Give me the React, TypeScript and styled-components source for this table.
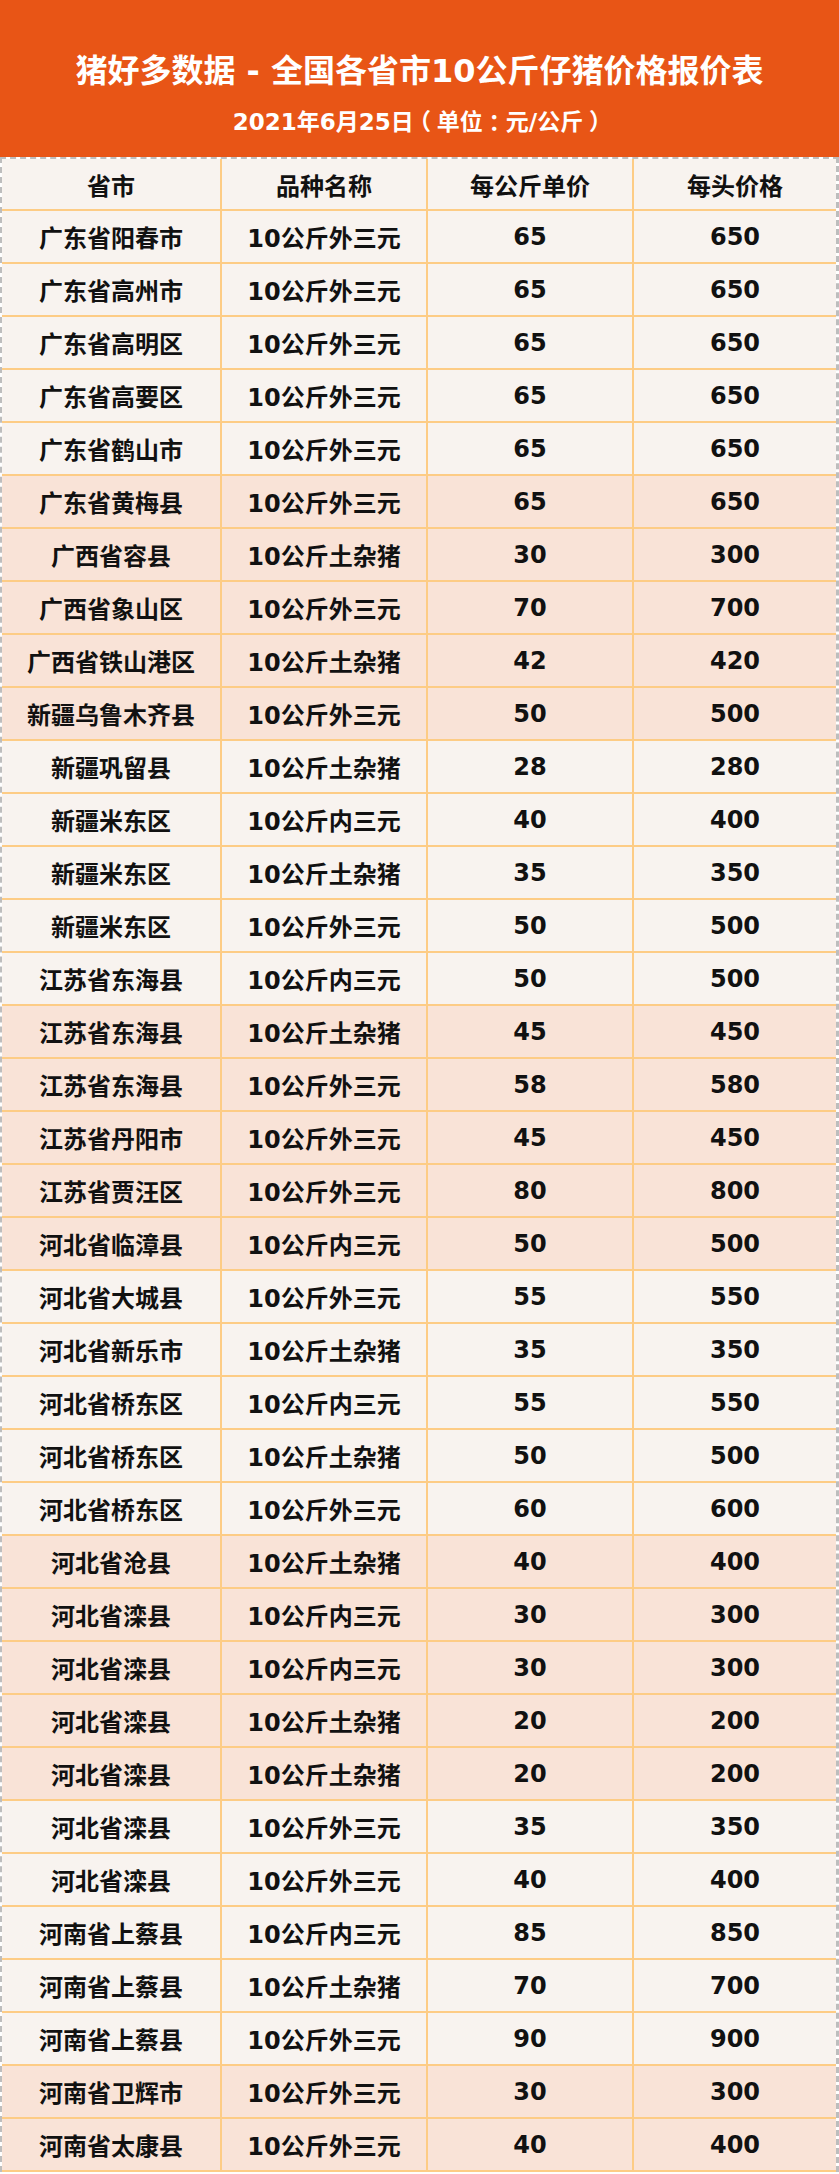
import styled, { createGlobalStyle } from "styled-components";

const GlobalStyle = createGlobalStyle`
  html, body {
    margin: 0;
    padding: 0;
    background: #ffffff;
  }
  body {
    font-family: "DejaVu Sans", "Noto Sans CJK SC", sans-serif;
  }
`;

type Row = [string, string, number, number];

const rows: Row[] = [
  ["广东省阳春市", "10公斤外三元", 65, 650],
  ["广东省高州市", "10公斤外三元", 65, 650],
  ["广东省高明区", "10公斤外三元", 65, 650],
  ["广东省高要区", "10公斤外三元", 65, 650],
  ["广东省鹤山市", "10公斤外三元", 65, 650],
  ["广东省黄梅县", "10公斤外三元", 65, 650],
  ["广西省容县", "10公斤土杂猪", 30, 300],
  ["广西省象山区", "10公斤外三元", 70, 700],
  ["广西省铁山港区", "10公斤土杂猪", 42, 420],
  ["新疆乌鲁木齐县", "10公斤外三元", 50, 500],
  ["新疆巩留县", "10公斤土杂猪", 28, 280],
  ["新疆米东区", "10公斤内三元", 40, 400],
  ["新疆米东区", "10公斤土杂猪", 35, 350],
  ["新疆米东区", "10公斤外三元", 50, 500],
  ["江苏省东海县", "10公斤内三元", 50, 500],
  ["江苏省东海县", "10公斤土杂猪", 45, 450],
  ["江苏省东海县", "10公斤外三元", 58, 580],
  ["江苏省丹阳市", "10公斤外三元", 45, 450],
  ["江苏省贾汪区", "10公斤外三元", 80, 800],
  ["河北省临漳县", "10公斤内三元", 50, 500],
  ["河北省大城县", "10公斤外三元", 55, 550],
  ["河北省新乐市", "10公斤土杂猪", 35, 350],
  ["河北省桥东区", "10公斤内三元", 55, 550],
  ["河北省桥东区", "10公斤土杂猪", 50, 500],
  ["河北省桥东区", "10公斤外三元", 60, 600],
  ["河北省沧县", "10公斤土杂猪", 40, 400],
  ["河北省滦县", "10公斤内三元", 30, 300],
  ["河北省滦县", "10公斤内三元", 30, 300],
  ["河北省滦县", "10公斤土杂猪", 20, 200],
  ["河北省滦县", "10公斤土杂猪", 20, 200],
  ["河北省滦县", "10公斤外三元", 35, 350],
  ["河北省滦县", "10公斤外三元", 40, 400],
  ["河南省上蔡县", "10公斤内三元", 85, 850],
  ["河南省上蔡县", "10公斤土杂猪", 70, 700],
  ["河南省上蔡县", "10公斤外三元", 90, 900],
  ["河南省卫辉市", "10公斤外三元", 30, 300],
  ["河南省太康县", "10公斤外三元", 40, 400],
];

function App() {
  return (
    <Page>
      <GlobalStyle />
      <Banner>
        <Title>猪好多数据 - 全国各省市10公斤仔猪价格报价表</Title>
        <SubTitle>
          2021年6月25日<Mark>（</Mark>单位<Mark>：</Mark>元/公斤<Mark>）</Mark>
        </SubTitle>
      </Banner>
      <Table>
        <TableRow $tone="cream" $head>
          <Cell>省市</Cell>
          <Cell>品种名称</Cell>
          <Cell>每公斤单价</Cell>
          <Cell>每头价格</Cell>
        </TableRow>
        {rows.map((r, i) => (
          <TableRow key={i} $tone={Math.floor(i / 5) % 2 ? "pink" : "cream"}>
            <Cell>{r[0]}</Cell>
            <Cell>{r[1]}</Cell>
            <Cell>{r[2]}</Cell>
            <Cell>{r[3]}</Cell>
          </TableRow>
        ))}
      </Table>
    </Page>
  );
}
export default App;

const Page = styled.div`
  width: 839px;
  height: 2174px;
  background: #ffffff;
`;

const Banner = styled.div`
  height: 157px;
  background-color: #e85516;
  display: flex;
  flex-direction: column;
  align-items: center;
  color: #ffffff;
  font-weight: bold;
  padding-top: 50px;
  box-sizing: border-box;
`;

const Title = styled.h1`
  margin: 0;
  font-size: 32px;
  line-height: 42px;
  font-weight: bold;
`;

const SubTitle = styled.div`
  margin-top: 13px;
  font-size: 23px;
  line-height: 30px;
`;

/* full-width marks: half-width glyph, centred with equal padding */
const Mark = styled.span`
  font-family: "Noto Sans CJK SC", sans-serif;
  font-feature-settings: "halt";
  padding: 0 0.25em;
`;

const Table = styled.div`
  border-top: 2px dashed #bdbdbd;
  border-left: 2px dashed #bdbdbd;
  border-right: 3px dashed #bdbdbd;
`;

const TableRow = styled.div<{ $tone: "cream" | "pink"; $head?: boolean }>`
  display: grid;
  grid-template-columns: 220px 206px 206px 1fr;
  height: ${(p) => (p.$head ? "52px" : "53px")};
  box-sizing: border-box;
  border-bottom: 2px solid #fdcc85;
  background-color: ${(p) => (p.$tone === "pink" ? "#f9e3d7" : "#f8f3ef")};
`;

const Cell = styled.div`
  display: flex;
  align-items: center;
  justify-content: center;
  font-size: 24px;
  font-weight: bold;
  color: #111111;
  border-right: 2px solid #fdcc85;
  white-space: nowrap;

  &:last-child {
    border-right: none;
  }
`;
